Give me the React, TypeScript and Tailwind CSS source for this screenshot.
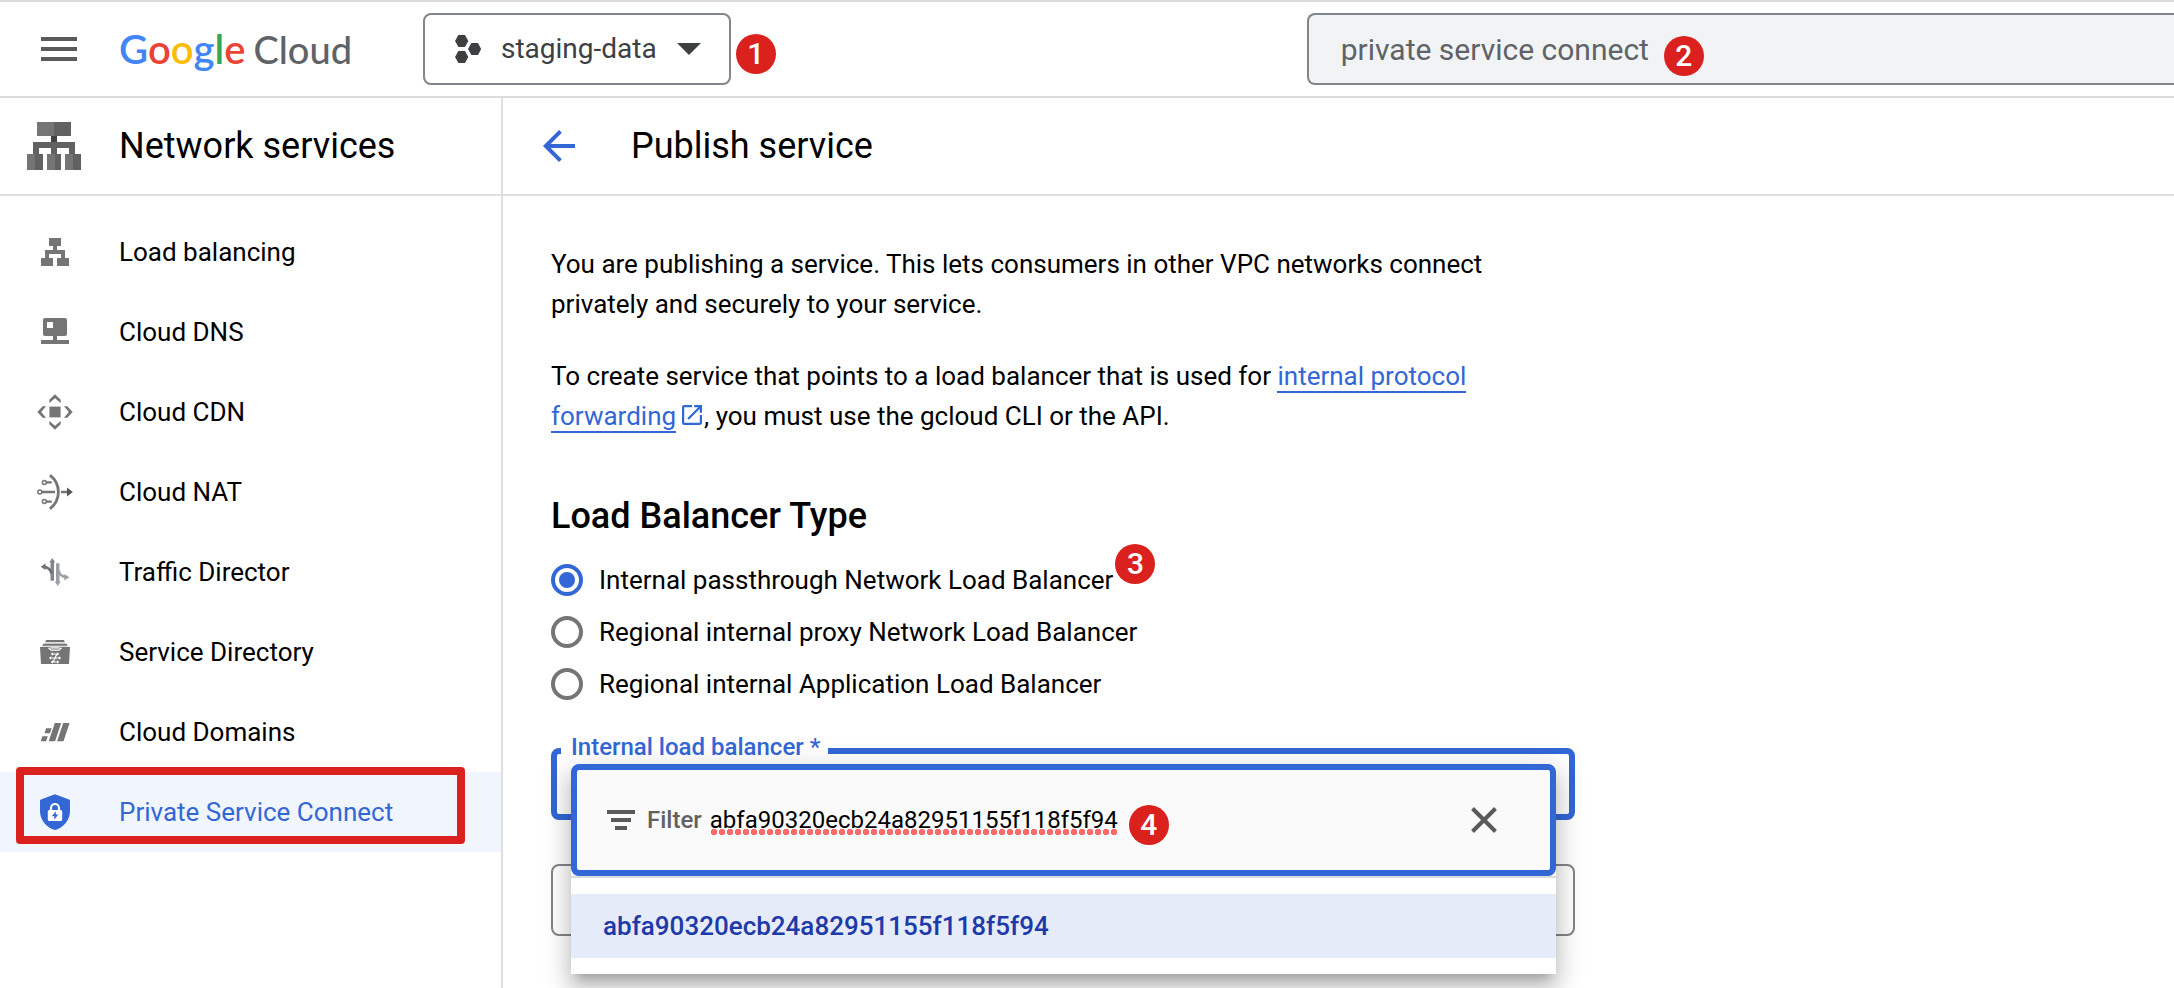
import { useState, type ReactNode } from "react";

const SERVICE_ID = "abfa90320ecb24a82951155f118f5f94";

function StepBadge({ n, className }: { n: number; className: string }) {
  return (
    <span
      className={`absolute flex size-10 items-center justify-center rounded-full bg-[#da211e] text-[30px] leading-10 font-medium text-white ${className}`}
    >
      {n}
    </span>
  );
}

function NavIcon({ children }: { children: ReactNode }) {
  return (
    <svg viewBox="0 0 36 36" className="size-9 shrink-0" fill="#757575" aria-hidden="true">
      {children}
    </svg>
  );
}

const NAV_ITEMS: { label: string; icon: ReactNode; active?: boolean }[] = [
  {
    label: "Load balancing",
    icon: (
      <path d="M12 4h12v8h-4v4h8v8h4v8H20v-8h4v-4H12v4h4v8H4v-8h4v-8h8v-4h-4z" />
    ),
  },
  {
    label: "Cloud DNS",
    icon: (
      <path
        fillRule="evenodd"
        d="M8 4h20a2 2 0 0 1 2 2v14a2 2 0 0 1-2 2h-8v4h12v4H4v-4h12v-4H8a2 2 0 0 1-2-2V6a2 2 0 0 1 2-2zm2 4v6h6V8z"
      />
    ),
  },
  {
    label: "Cloud CDN",
    icon: (
      <>
        <path d="M12.4 12.6h11.2v10.8H12.4z" />
        <path d="M18 .3l5.700 5.400V9L18 4.200 12.300 9V5.700zM18 35.700l5.700-5.400V27L18 31.800 12.300 27v3.300z" />
        <path d="M.3 18l5.400-5.700H9L4.200 18 9 23.700H5.700zM35.700 18l-5.400-5.700H27L31.800 18 27 23.700h3.300z" />
      </>
    ),
  },
  {
    label: "Cloud NAT",
    icon: (
      <>
        <g fill="none" stroke="#757575">
          <path strokeWidth="2.8" d="M13 1.200c5.700 4.600 8.400 10.200 8.400 16.800S18.700 30.200 13 34.800" />
          <g strokeWidth="1.5">
            <circle cx="2.8" cy="18" r="2" />
            <circle cx="7.4" cy="8.4" r="2" />
            <circle cx="7.4" cy="27.6" r="2" />
          </g>
          <path strokeWidth="2.4" d="M5 18h13M9.600 8.400h5.200M9.600 27.600h5.200M24 18h7" />
        </g>
        <path fill="#565656" d="M30 13.600l5.800 4.400-5.800 4.400z" />
      </>
    ),
  },
  {
    label: "Traffic Director",
    icon: (
      <>
        <path fill="#80868b" d="M15.300 4l3 4.500H17v18.300h-3.500V8.500h-1.200z" />
        <path fill="none" stroke="#6b7075" strokeWidth="2.6" d="M7 13c4 .2 6.500 2.500 7.500 6.500" />
        <path fill="#6b7075" d="M3.600 12.800l5-3.300v6.600z" />
        <path fill="#9aa0a6" d="M20.700 32l-3-4.500H19V9.200h3.500v18.300h1.200z" />
        <path fill="none" stroke="#9aa0a6" strokeWidth="2.6" d="M29 23c-4-.2-6.500-2.500-7.500-6.500" />
        <path fill="#9aa0a6" d="M32.400 23.200l-5 3.300v-6.600z" />
      </>
    ),
  },
  {
    label: "Service Directory",
    icon: (
      <>
        <path fill="#dedede" d="M8.300 8h19.400l1 1.700H7.300zM5.300 11.700h25.400l.6 1.300H4.700z" />
        <path d="M9 6h18l.7 2H8.300zM6.300 9.700h23.400l1 2H5.300zM3 13h30l-1 17H4z" />
        <path fill="none" stroke="#fff" strokeWidth="1.3" d="M11.500 13.800l2.600 2.400h7.800l2.600-2.400M13.500 13.800h9" />
        <path fill="none" stroke="#fff" strokeWidth="1.2" d="M15 20h6M13 24h10M15 28h6M19.800 20l-3.600 8" />
        <path
          fill="#fff"
          d="M16 18.200v3.600L13.700 20zM20 18.200v3.600l2.300-1.800zM16 26.200v3.600L13.700 28zM20 26.200v3.600l2.300-1.800zM21.800 22.200v3.600l2.400-1.800zM14.200 22.200v3.600L11.800 24z"
        />
      </>
    ),
  },
  {
    label: "Cloud Domains",
    icon: (
      <path d="M17.800 9h6.400l-6.100 18.300h-6.400zM26.200 9h6.400l-6.100 18.300h-6.400zM9.200 14.200h5.400l-1.700 5H7.500zM5.400 22.300h5.400l-1.700 5H3.700z" />
    ),
  },
  {
    label: "Private Service Connect",
    active: true,
    icon: (
      <>
        <path
          fill="#3367d6"
          d="M18 .2l14 5.300c.7.300 1 .7 1 1.400V17c0 8.800-6.200 16.700-15 19-8.800-2.300-15-10.200-15-19V6.900c0-.7.3-1.100 1-1.400z"
        />
        <path fill="none" stroke="#fff" strokeWidth="2.2" d="M14 17v-3a4 4 0 0 1 8 0v3" />
        <rect x="10.800" y="16" width="14.400" height="11" rx="1.5" fill="#fff" />
        <path fill="#3367d6" d="M18.800 17.300v3.300h2.500l-4 5.200v-3.500h-2.500z" />
      </>
    ),
  },
];

const LB_TYPES = [
  "Internal passthrough Network Load Balancer",
  "Regional internal proxy Network Load Balancer",
  "Regional internal Application Load Balancer",
];

function Header() {
  return (
    <header className="flex h-[98px] items-center border-y-2 border-[#dadce0] pl-[41px]">
      <button type="button" aria-label="Main menu" className="shrink-0">
        <svg viewBox="0 0 36 24" className="h-6 w-9" fill="#5a5a5a" aria-hidden="true">
          <path d="M0 0h36v4H0zM0 10h36v4H0zM0 20h36v4H0z" />
        </svg>
      </button>
      <a
        href="#home"
        className="ml-[42px] flex w-[238px] shrink-0 items-baseline gap-2 font-[Lato,sans-serif] text-[40px] leading-[48px]"
      >
        <span className="font-semibold">
          <span className="text-[#4285f4]">G</span>
          <span className="text-[#ea4335]">o</span>
          <span className="text-[#fbbc04]">o</span>
          <span className="text-[#4285f4]">g</span>
          <span className="text-[#34a853]">l</span>
          <span className="text-[#ea4335]">e</span>
        </span>
        <span className="text-[38px] font-medium text-[#5f6368]">Cloud</span>
      </a>
      <div className="relative ml-[66px] shrink-0">
        <button
          type="button"
          className="flex h-[72px] items-center gap-5 rounded-lg border-2 border-[#80868b] pr-7 pl-[30px] text-[28px] text-[#3c4043]"
        >
          <svg viewBox="0 0 26 28" className="h-7 w-[26px]" fill="#3c4043" aria-hidden="true">
            <path d="M3.400 0h6.600l3.300 6-3.300 6H3.400L0 6zM16.400 8H23l3.200 6-3.200 6h-6.600L13 14zM3.400 16h6.600l3.300 6-3.300 6H3.400L0 22z" />
          </svg>
          staging-data
          <svg viewBox="0 0 24 12" className="h-3 w-6" fill="#3c4043" aria-hidden="true">
            <path d="M0 0h24L12 12z" />
          </svg>
        </button>
        <StepBadge n={1} className="top-[21px] left-full ml-[5px]" />
      </div>
      <form className="relative ml-[576px] flex min-w-0 flex-1" onSubmit={(e) => e.preventDefault()}>
        <input
          type="text"
          aria-label="Search"
          defaultValue="private service connect"
          className="h-[72px] w-full min-w-0 rounded-l-lg border-2 border-r-0 border-[#80868b] bg-[#f1f3f4] px-8 text-[30px] text-[#5f6368] outline-none"
        />
        <StepBadge n={2} className="top-[23px] left-[357px]" />
      </form>
    </header>
  );
}

function Sidebar() {
  return (
    <aside className="w-[503px] shrink-0 border-r-2 border-[#e0e0e0]">
      <div className="flex h-[98px] items-center border-b-2 border-[#e0e0e0] pl-[27px]">
        <svg viewBox="0 0 54 48" className="h-12 w-[54px]" aria-hidden="true">
          <path fill="#616161" d="M27 0h17v14H27zM6 20h42v12h6v16h-8V32h-4v-6H30v6h4v16h-6V32h-4v-6H12v6h4v16H8V32H6z" />
          <path fill="#757575" d="M10 0h17v14H10zM0 32h8v16H0zM20 32h8v16h-8zM38 32h8v16h-8z" />
          <path fill="#424242" d="M24 14h6v6h-6z" />
        </svg>
        <h1 className="ml-[38px] text-4xl text-black">Network services</h1>
      </div>
      <nav className="pt-4">
        <ul>
          {NAV_ITEMS.map((item) => (
            <li key={item.label} className="relative">
              <a
                href="#section"
                aria-current={item.active ? "page" : undefined}
                className={`flex h-20 items-center gap-[46px] pl-[37px] text-[26px] ${
                  item.active ? "bg-[#f0f5fe] text-[#3367d6]" : "text-black"
                }`}
              >
                <NavIcon>{item.icon}</NavIcon>
                {item.label}
              </a>
              {item.active && (
                <span className="pointer-events-none absolute -top-[5px] right-9 bottom-2 left-4 rounded border-8 border-[#da211e]" />
              )}
            </li>
          ))}
        </ul>
      </nav>
    </aside>
  );
}

function BalancerPicker() {
  const [filter, setFilter] = useState(SERVICE_ID);
  return (
    <div className="relative mt-[38px]">
      <select
        id="internal-lb"
        className="block h-[72px] w-full appearance-none rounded-lg border-[6px] border-[#3367d6] bg-white"
      />
      <label
        htmlFor="internal-lb"
        className="absolute -top-4 left-[10px] bg-white pr-2 pl-[10px] text-2xl leading-[30px] font-medium text-[#3367d6]"
      >
        Internal load balancer *
      </label>
      <select
        aria-label="Subnets"
        className="mt-11 block h-[72px] w-full appearance-none rounded-lg border-2 border-[#80868b] bg-white"
      />
      <div className="absolute top-4 right-[19px] left-5 bg-white pb-4 shadow-[0_10px_10px_-6px_rgba(0,0,0,0.2),0_16px_20px_2px_rgba(0,0,0,0.14),0_6px_28px_4px_rgba(0,0,0,0.12)]">
        <div className="border-b-2 border-[#dadce0]">
          <div className="flex h-28 items-center rounded-lg border-[6px] border-[#3367d6] bg-[#fafafa] pr-[53px] pl-[30px] text-2xl">
            <svg viewBox="0 0 28 20" className="h-5 w-7 shrink-0" fill="#5a5a5a" aria-hidden="true">
              <path d="M0 0h28v4H0zM4 8h20v4H4zM8 16h12v4H8z" />
            </svg>
            <label htmlFor="lb-filter" className="ml-3 font-medium text-[#616161]">
              Filter
            </label>
            <div className="relative ml-2">
              <input
                id="lb-filter"
                type="text"
                value={filter}
                onChange={(e) => setFilter(e.target.value)}
                className="block h-8 field-sizing-content bg-[radial-gradient(circle,#ff6b6b_3px,transparent_3px)] bg-[length:8px_8px] bg-bottom-left bg-repeat-x text-black outline-none"
              />
              <StepBadge n={4} className="top-px left-full ml-[11px]" />
            </div>
            <button type="button" aria-label="Clear filter" className="ml-auto" onClick={() => setFilter("")}>
              <svg viewBox="0 0 26 26" className="size-[26px]" stroke="#5a5a5a" strokeWidth="4" aria-hidden="true">
                <path d="M1.500 1.500l23 23M24.500 1.500l-23 23" />
              </svg>
            </button>
          </div>
        </div>
        <ul role="listbox" aria-label="Internal load balancers" className="pt-4">
          <li
            role="option"
            aria-selected="true"
            className="h-16 bg-[#e6ebf9] px-8 text-[26px] leading-[64px] font-medium text-[#1c3aa9]"
          >
            {SERVICE_ID}
          </li>
        </ul>
      </div>
    </div>
  );
}

function PublishService() {
  const [type, setType] = useState(0);
  return (
    <main className="min-w-0 flex-1 text-black">
      <div className="flex h-[98px] items-center border-b-2 border-[#e0e0e0] pl-10">
        <button type="button" aria-label="Back">
          <svg viewBox="4 4 16 16" className="size-8" fill="#3367d6" aria-hidden="true">
            <path d="M20 11H7.830l5.590-5.590L12 4l-8 8 8 8 1.410-1.410L7.830 13H20z" />
          </svg>
        </button>
        <h1 className="ml-14 text-4xl">Publish service</h1>
      </div>
      <div className="max-w-[1120px] p-12 pb-0 text-[26px] leading-10">
        <p>
          You are publishing a service. This lets consumers in other VPC networks connect privately and securely to
          your service.
        </p>
        <p className="mt-8">
          To create service that points to a load balancer that is used for{" "}
          <a href="#forwarding" className="text-[#3367d6]">
            <span className="border-b-2 border-[#3367d6]">internal protocol forwarding</span>
            <svg viewBox="3 3 18 18" className="mr-0.5 ml-[6px] inline size-5 align-baseline" fill="#3367d6" aria-hidden="true">
              <path d="M19 19H5V5h7V3H5a2 2 0 0 0-2 2v14a2 2 0 0 0 2 2h14c1.100 0 2-.9 2-2v-7h-2v7zM14 3v2h3.590l-9.830 9.830 1.410 1.410L19 6.410V10h2V3h-7z" />
            </svg>
          </a>
          , you must use the gcloud CLI or the API.
        </p>
        <h2 className="mt-14 text-4xl leading-[48px] font-medium" id="lb-type">
          Load Balancer Type
        </h2>
        <div role="radiogroup" aria-labelledby="lb-type" className="mt-[14px] flex flex-col items-start">
          {LB_TYPES.map((label, i) => (
            <label key={label} className="relative flex h-[52px] items-center gap-4">
              <input
                type="radio"
                name="lb-type"
                checked={type === i}
                onChange={() => setType(i)}
                className="size-8 shrink-0 appearance-none rounded-full border-4 border-[#757575] bg-white bg-clip-content p-1 checked:border-[#3367d6] checked:bg-[#3367d6]"
              />
              {label}
              {i === 0 && <StepBadge n={3} className="-top-[10px] left-full ml-[2px]" />}
            </label>
          ))}
        </div>
        <BalancerPicker />
      </div>
    </main>
  );
}

export default function App() {
  return (
    <div className="flex min-h-screen flex-col overflow-x-clip bg-white font-[Roboto,sans-serif]">
      <Header />
      <div className="flex flex-1">
        <Sidebar />
        <PublishService />
      </div>
    </div>
  );
}
